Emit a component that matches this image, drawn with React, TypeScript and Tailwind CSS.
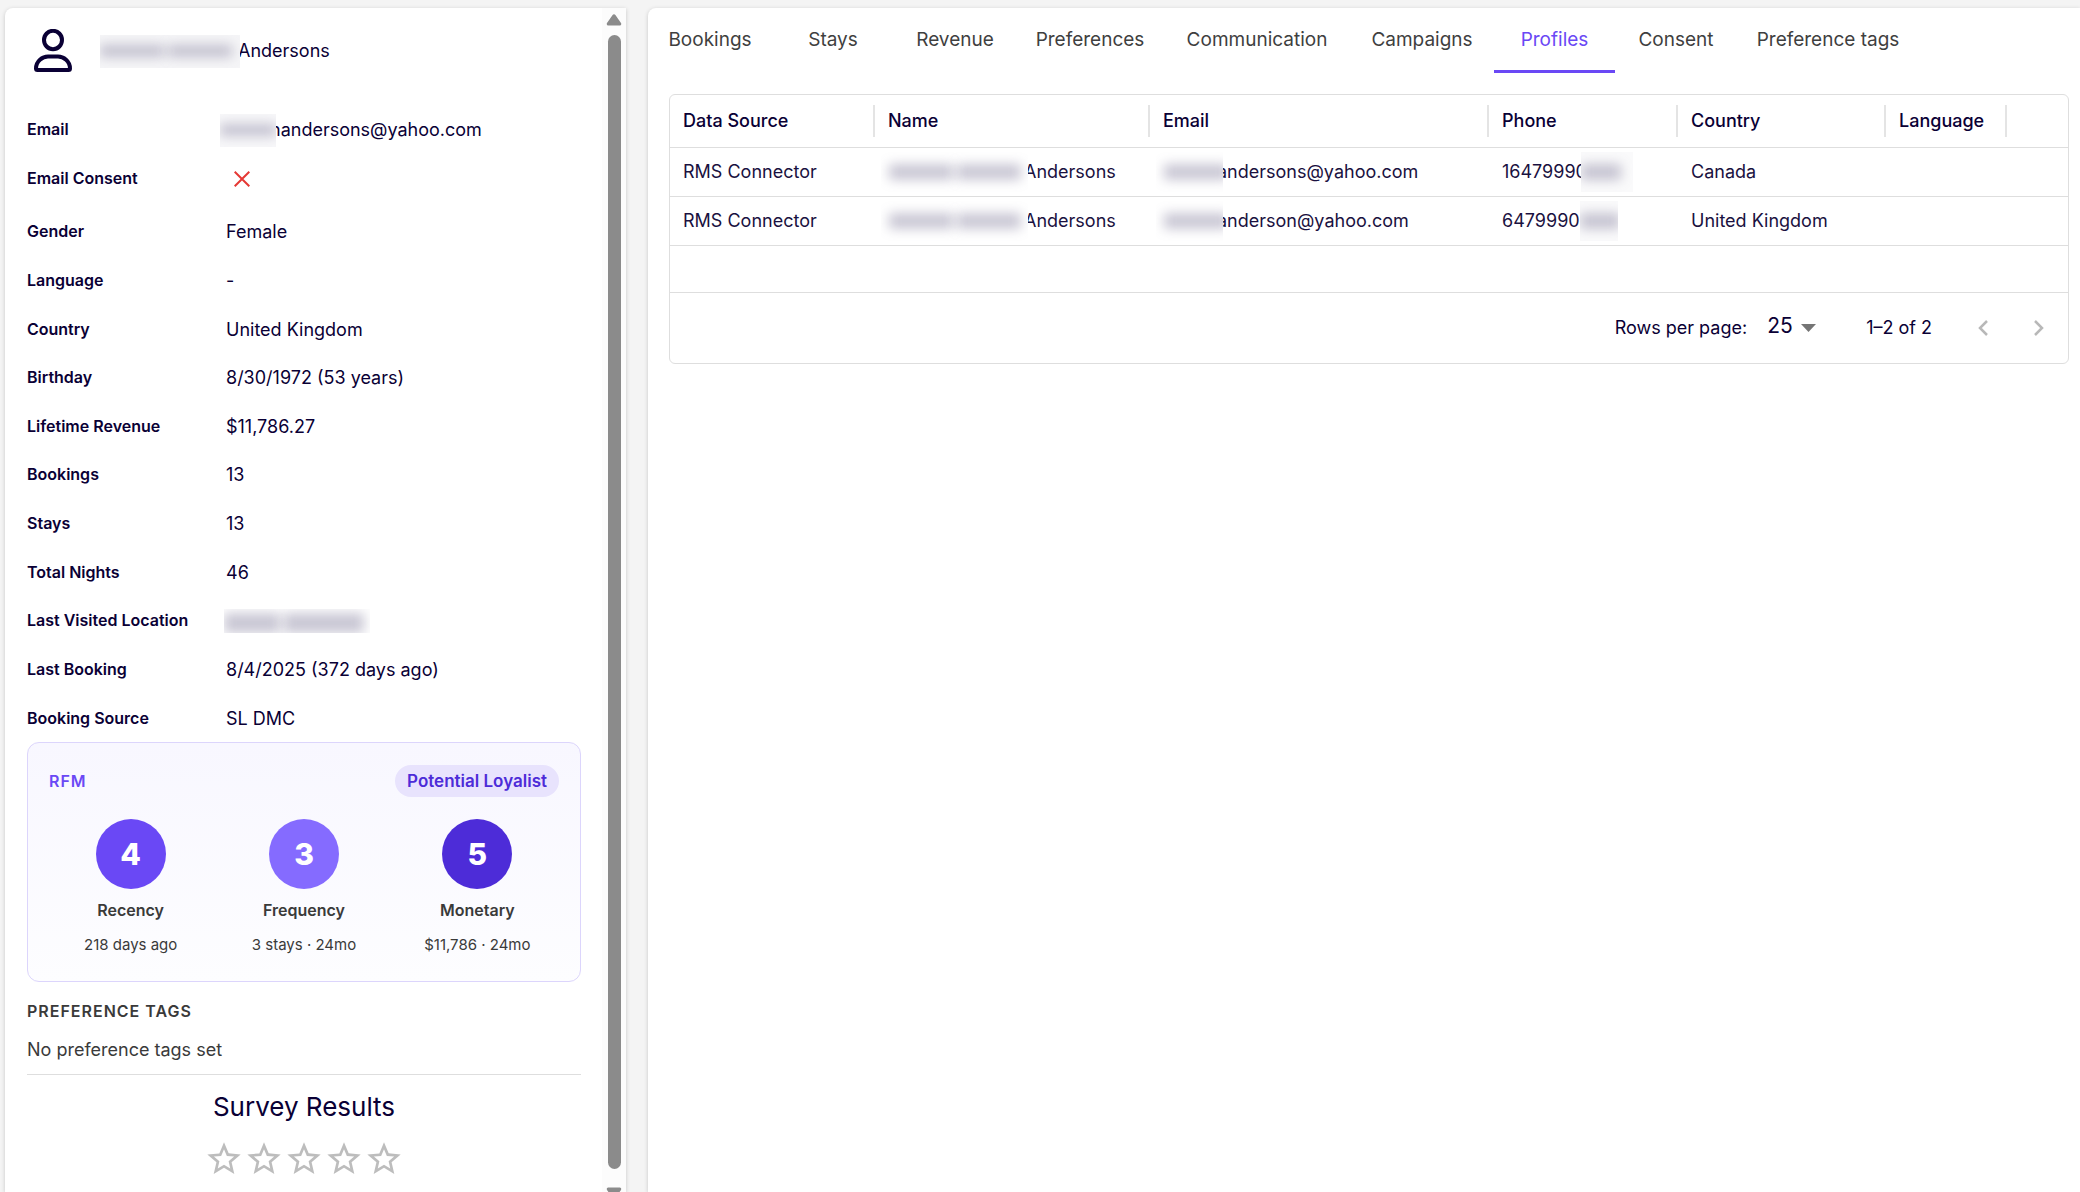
import { useState } from 'react';
import type { ReactNode } from 'react';

type Smudge = { box: string; bars: string[] };

const details: { label: string; value: ReactNode }[] = [
    { label: 'Gender', value: 'Female' },
    { label: 'Language', value: '-' },
    { label: 'Country', value: 'United Kingdom' },
    { label: 'Birthday', value: '8/30/1972 (53 years)' },
    { label: 'Lifetime Revenue', value: '$11,786.27' },
    { label: 'Bookings', value: '13' },
    { label: 'Stays', value: '13' },
    { label: 'Total Nights', value: '46' },
    {
        label: 'Last Visited Location',
        value: <Redacted box="-ml-0.5 h-6 w-[146px] items-end bg-white" bars={['h-5 w-14', 'h-5 w-20']} />,
    },
    { label: 'Last Booking', value: '8/4/2025 (372 days ago)' },
    { label: 'Booking Source', value: 'SL DMC' },
];

const scores = [
    { score: 4, label: 'Recency', note: '218 days ago', color: 'bg-[#6a48f5]' },
    { score: 3, label: 'Frequency', note: '3 stays · 24mo', color: 'bg-[#856bff]' },
    { score: 5, label: 'Monetary', note: '$11,786 · 24mo', color: 'bg-[#4d2cd8]' },
];

const tabs = [
    { name: 'Bookings', width: 'w-[124px]' },
    { name: 'Stays', width: 'w-[122px]' },
    { name: 'Revenue', width: 'w-[122px]' },
    { name: 'Preferences', width: 'w-[148px]' },
    { name: 'Communication', width: 'w-[186px]' },
    { name: 'Campaigns', width: 'w-[144px]' },
    { name: 'Profiles', width: 'w-[121px]' },
    { name: 'Consent', width: 'w-[122px]' },
    { name: 'Preference tags', width: 'w-[182px]' },
];

const columns = [
    { name: 'Data Source', width: 'w-[205px]' },
    { name: 'Name', width: 'w-[275px]' },
    { name: 'Email', width: 'w-[339px]' },
    { name: 'Phone', width: 'w-[189px]' },
    { name: 'Country', width: 'w-[208px]' },
    { name: 'Language', width: 'w-[121px]' },
];

const profiles = [
    { source: 'RMS Connector', email: 'andersons@yahoo.com', phone: '16479990', country: 'Canada', phoneBox: '-ml-1.5 w-[52px]' },
    { source: 'RMS Connector', email: 'anderson@yahoo.com', phone: '6479990', country: 'United Kingdom', phoneBox: 'w-[38px]' },
];

// masked personal data, drawn as soft grey bars that cover the edge of the text beside them
function Redacted({ box, bars }: Smudge) {
    return (
        <span aria-hidden="true" className={`relative flex shrink-0 gap-1 overflow-hidden ${box}`}>
            {bars.map((bar, i) => (
                <span key={i} className={`shrink-0 bg-[#4b4470]/30 blur-[6px] ${bar}`} />
            ))}
        </span>
    );
}

function PersonIcon() {
    return (
        <svg width="40" height="44" viewBox="0 0 40 44" fill="none" stroke="#0a0035" strokeWidth="4" aria-hidden="true">
            <ellipse cx="20" cy="11" rx="9" ry="9.2" />
            <path d="M3 39.5C3 32 9.500 27.500 15 27.500h10c5.500 0 12 4.500 12 12 0 1-.8 1.500-1.500 1.500h-31C3.800 41 3 40.500 3 39.500Z" />
        </svg>
    );
}

function ScrollBar() {
    return (
        <div aria-hidden="true" className="flex w-6 shrink-0 flex-col items-center bg-[#fcfcfc] pt-1.5">
            <svg width="16" height="12" viewBox="0 0 16 12" fill="#8b8b8b">
                <path d="M6.600.9a1.700 1.700 0 0 1 2.800 0l5.600 8.200c.7 1-.1 2.400-1.300 2.400H2.300C1.100 11.500.3 10.100 1 9.100Z" />
            </svg>
            <div className="mt-[9px] w-[13px] grow rounded-full bg-[#8b8b8b]" />
            <svg className="mt-[18px]" width="16" height="5" viewBox="0 0 16 5" fill="#8b8b8b">
                <path d="M2.300.5h11.400c1.200 0 2 1.400 1.300 2.400L13.600 5H2.400L1 2.900C.3 1.900 1.100.5 2.300.5Z" />
            </svg>
        </div>
    );
}

function GuestPanel() {
    return (
        <aside className="flex w-[621px] shrink-0 overflow-hidden rounded-tl-lg bg-white shadow-[0_1px_4px_rgba(0,0,0,0.18)]">
            <div className="grow pt-5 pl-[22px]">
                <div className="w-[554px]">
                    <div className="flex h-[46px] items-center">
                        <span className="ml-1.5 w-[67px]">
                            <PersonIcon />
                        </span>
                        <Redacted box="h-[33px] w-[140px] -mr-0.5 items-center bg-[#f5f5f7]" bars={['h-3 w-16', 'h-3 w-16']} />
                        <h1 className="text-lg">Andersons</h1>
                    </div>

                    <dl className="pt-[31px]">
                        <div className="flex h-12 items-center">
                            <dt className="w-[193px] text-base font-semibold">Email</dt>
                            <dd className="flex items-center pt-0.5 text-lg">
                                <Redacted box="-mr-1.5 h-[33px] w-14 items-center bg-[#f7f7f9]" bars={['h-3 w-14']} />
                                nandersons@yahoo.com
                            </dd>
                        </div>
                        <div className="flex h-[50px] items-center">
                            <dt className="w-[207px] text-base font-semibold">Email Consent</dt>
                            <dd className="pt-0.5">
                                <svg role="img" aria-label="No" width="16" height="16" viewBox="0 0 16 16" stroke="#e53935" strokeWidth="2">
                                    <path d="M.7.7l14.600 14.600M15.300.7.7 15.300" />
                                </svg>
                            </dd>
                        </div>
                        <div className="mt-1 grid min-h-[535px] auto-rows-fr">
                            {details.map((row) => (
                                <div key={row.label} className="flex items-center">
                                    <dt className="w-[199px] text-base font-semibold">{row.label}</dt>
                                    <dd className="pt-0.5 text-lg">{row.value}</dd>
                                </div>
                            ))}
                        </div>
                    </dl>

                    <section className="rounded-xl border border-[#dcd5fc] bg-linear-to-b from-[#f8f7ff] to-[#fdfdff] px-4 pt-[22px] pb-6">
                        <div className="flex items-center justify-between px-[5px]">
                            <h2 className="text-base font-semibold tracking-[1px] text-[#6a48f5]">RFM</h2>
                            <span className="rounded-full bg-[#e8e3fd] px-3 py-1 text-[17px] leading-6 font-semibold text-[#4d2cd8]">
                                Potential Loyalist
                            </span>
                        </div>
                        <div className="mt-[22px] grid grid-cols-3 text-center text-[#3a3a3a]">
                            {scores.map((item) => (
                                <div key={item.label} className="flex flex-col items-center">
                                    <span className={`flex size-[70px] items-center justify-center rounded-full text-3xl font-extrabold text-white ${item.color}`}>
                                        {item.score}
                                    </span>
                                    <span className="mt-[9px] text-base leading-6 font-semibold">{item.label}</span>
                                    <span className="mt-[11px] text-[15px] leading-6">{item.note}</span>
                                </div>
                            ))}
                        </div>
                    </section>

                    <section className="border-b border-[#dedede] pt-[17px] pb-2.5 text-[#3a3a3a]">
                        <h2 className="text-base leading-6 font-semibold tracking-[1px]">PREFERENCE TAGS</h2>
                        <p className="mt-[13px] text-lg leading-7">No preference tags set</p>
                    </section>

                    <section className="flex flex-col items-center pt-3">
                        <h2 className="text-[26px] leading-10">Survey Results</h2>
                        <div role="img" aria-label="0 of 5 stars" className="mt-3 flex">
                            {[1, 2, 3, 4, 5].map((n) => (
                                <svg key={n} className="size-10" viewBox="0 0 24 24" fill="#bdbdbd">
                                    <path d="m22 9.240-7.190-.62L12 2 9.190 8.630 2 9.240l5.460 4.730L5.820 21 12 17.270 18.180 21l-1.630-7.030zM12 15.400l-3.760 2.270 1-4.280-3.320-2.880 4.380-.38L12 6.100l1.710 4.040 4.380.38-3.320 2.880 1 4.280z" />
                                </svg>
                            ))}
                        </div>
                    </section>
                </div>
            </div>
            <ScrollBar />
        </aside>
    );
}

function ProfilesTable() {
    return (
        <div className="mt-[21px] mr-[11px] ml-[21px] rounded-md border border-[#dedede]">
            <table className="w-full table-fixed text-left text-lg">
                <thead>
                    <tr className="h-[52px] border-b border-[#dedede]">
                        {columns.map((col) => (
                            <th key={col.name} scope="col" className={`p-0 font-medium ${col.width}`}>
                                <div className="flex h-8 items-center border-r-2 border-[#e4e4e4] pl-[13px]">{col.name}</div>
                            </th>
                        ))}
                        <td />
                    </tr>
                </thead>
                <tbody className="text-[#1a1140]">
                    {profiles.map((row) => (
                        <tr key={row.email} className="h-[49px] border-b border-[#dedede]">
                            <td className="pl-[13px]">{row.source}</td>
                            <td className="pl-1.5">
                                <div className="flex items-center">
                                    <Redacted box="-mr-1 h-10 w-[147px] items-center bg-white pl-2" bars={['h-4 w-16', 'h-4 w-16']} />
                                    Andersons
                                </div>
                            </td>
                            <td className="pl-1.5">
                                <div className="flex items-center">
                                    <Redacted box="-mr-1.5 h-10 w-[67px] items-center bg-white pl-2" bars={['h-4 w-16']} />
                                    {row.email}
                                </div>
                            </td>
                            <td className="pl-[13px]">
                                <div className="flex items-center">
                                    {row.phone}
                                    <Redacted box={`h-10 items-center bg-[#fafafb] ${row.phoneBox}`} bars={['h-4 w-10']} />
                                </div>
                            </td>
                            <td className="pl-[13px]">{row.country}</td>
                            <td />
                            <td />
                        </tr>
                    ))}
                </tbody>
            </table>
            <div className="h-[47px] border-b border-[#dedede]" />
            <div className="flex h-[70px] items-center justify-end pr-3 text-lg">
                <label htmlFor="rows">Rows per page:</label>
                <div className="ml-5 flex items-center">
                    <select id="rows" className="appearance-none bg-transparent pb-0.5 text-[21px]" defaultValue="25">
                        <option>25</option>
                    </select>
                    <svg className="ml-2" width="15" height="8" viewBox="0 0 15 8" fill="#757575" aria-hidden="true">
                        <path d="M0 0h15L7.500 8z" />
                    </svg>
                </div>
                <span className="ml-[50px]">1–2 of 2</span>
                <button type="button" disabled aria-label="Previous page" className="ml-[34px] p-3">
                    <Chevron d="M9 1 2 8l7 7" />
                </button>
                <button type="button" disabled aria-label="Next page" className="ml-5 p-3">
                    <Chevron d="m2 1 7 7-7 7" />
                </button>
            </div>
        </div>
    );
}

function Chevron({ d }: { d: string }) {
    return (
        <svg width="11" height="16" viewBox="0 0 11 16" fill="none" stroke="#b8b8b8" strokeWidth="2.500">
            <path d={d} />
        </svg>
    );
}

export default function App() {
    const [active, setActive] = useState('Profiles');

    return (
        <div className="flex h-screen gap-[22px] overflow-hidden bg-[#f4f4f4] pt-2 pl-[5px] font-['Inter',sans-serif] text-[#0a0035]">
            <GuestPanel />
            <main className="min-w-0 grow rounded-tl-lg bg-white shadow-[0_1px_4px_rgba(0,0,0,0.18)]">
                <div role="tablist" className="flex">
                    {tabs.map((tab) => (
                        <button
                            key={tab.name}
                            type="button"
                            role="tab"
                            aria-selected={tab.name === active}
                            onClick={() => setActive(tab.name)}
                            className={`h-[65px] shrink-0 border-b-3 pt-[3px] text-[19px] whitespace-nowrap ${tab.width} ${
                                tab.name === active ? 'border-[#6a48f5] text-[#6a48f5]' : 'border-transparent text-[#3f3f3f]'
                            }`}
                        >
                            {tab.name}
                        </button>
                    ))}
                </div>
                <ProfilesTable />
            </main>
        </div>
    );
}
